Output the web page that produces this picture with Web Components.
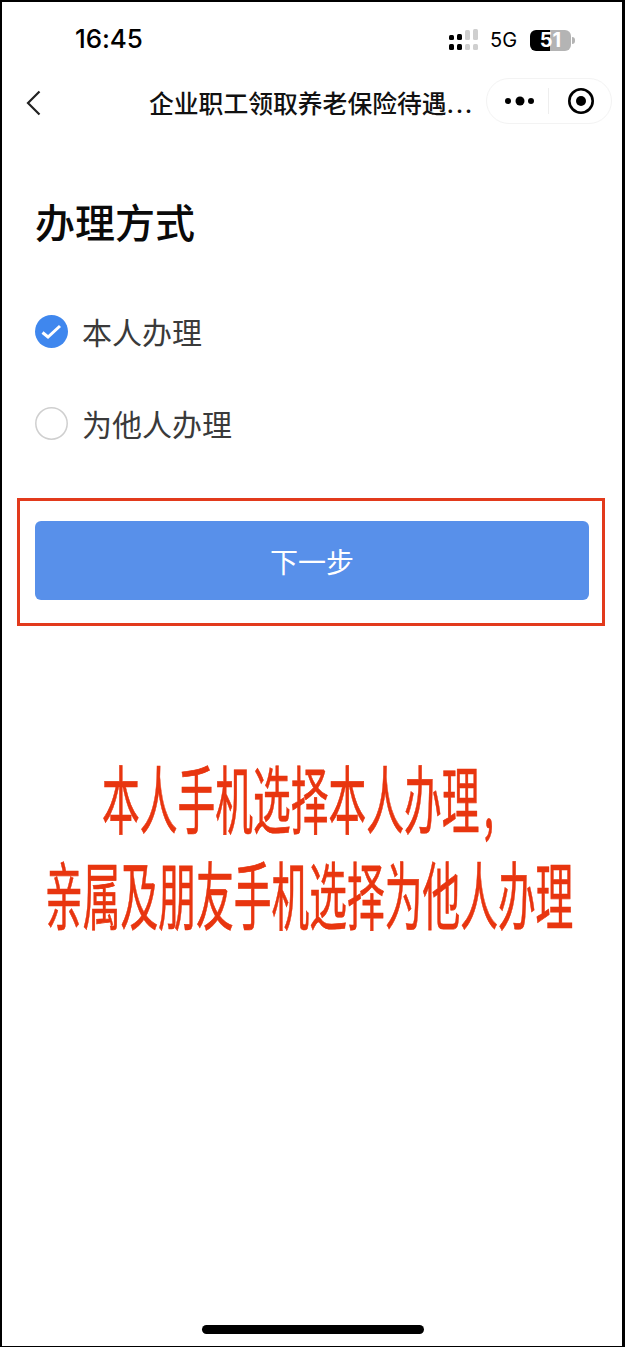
<!DOCTYPE html>
<html lang="zh-CN">
<head>
<meta charset="utf-8">
<title>办理方式</title>
<style>
  html, body { margin: 0; padding: 0; background: #fff; }
  body { font-family: "Inter", "Noto Sans CJK SC", sans-serif; }
</style>
</head>
<body>
<phone-frame>
  <status-bar time="16:45" network="5G" battery="51"></status-bar>
  <nav-bar>企业职工领取养老保险待遇<span style="font-family:Inter,sans-serif;letter-spacing:1.6px">...</span></nav-bar>
  <section-title>办理方式</section-title>
  <radio-row checked>本人办理</radio-row>
  <radio-row>为他人办理</radio-row>
  <marked-button>下一步</marked-button>
  <note-text>
    <span class="first">本人手机选择本人办理<span style="margin-left:8px">,</span></span>
    <span class="second">亲属及朋友手机选择为他人办理</span>
  </note-text>
  <home-bar></home-bar>
</phone-frame>

<script>
const CJK = '"Noto Sans CJK SC", sans-serif';

customElements.define('phone-frame', class extends HTMLElement {
  connectedCallback() {
    this.attachShadow({ mode: 'open' }).innerHTML = `
      <style>
        :host {
          display: flex;
          flex-direction: column;
          box-sizing: border-box;
          width: 625px;
          height: 1347px;
          border: solid #000;
          border-width: 2px 3px 1px 2px;
          background: #fff;
          overflow: hidden;
        }
      </style>
      <slot></slot>
    `;
  }
});

customElements.define('status-bar', class extends HTMLElement {
  connectedCallback() {
    const time = this.getAttribute('time') || '';
    const network = this.getAttribute('network') || '';
    const battery = this.getAttribute('battery') || '';
    this.attachShadow({ mode: 'open' }).innerHTML = `
      <style>
        :host {
          display: flex;
          align-items: center;
          height: 74px;
          padding: 0 47px 0 73px;
          color: #000;
        }
        .time {
          font: 500 26px/1 "Inter", sans-serif;
          letter-spacing: -0.1px;
        }
        .right { margin-left: auto; display: flex; align-items: center; margin-top: 2px; }
        svg.signal { display: block; width: 32px; height: 22px; }
        .net { font: 400 20px/1 "Inter", sans-serif; margin-left: 9px; width: 40px; }
        .battery {
          width: 41px;
          height: 21px;
          border-radius: 6px;
          background: linear-gradient(to right, #000 0 49%, #b4b4b4 49% 100%);
          color: #fff;
          font: 700 20px/21px "Inter", sans-serif;
          text-align: center;
        }
        .nub { width: 3px; height: 7px; margin-left: 1px; border-radius: 0 3px 3px 0; background: #b4b4b4; }
      </style>
      <span class="time">${time}</span>
      <div class="right">
        <svg class="signal" viewBox="0 0 32 22" fill="#000">
          <rect x="0" y="6" width="5" height="5" rx="1.5"/>
          <rect x="8" y="5" width="5" height="6" rx="1.5"/>
          <rect x="16" y="1" width="5" height="10" rx="1.5" fill="#cfcfcf"/>
          <rect x="24" y="0" width="5" height="11" rx="1.5" fill="#cfcfcf"/>
          <rect x="0" y="15" width="5" height="6" rx="1.5"/>
          <rect x="8" y="15" width="5" height="6" rx="1.5"/>
          <rect x="16" y="15" width="5" height="6" rx="1.5" fill="#cfcfcf"/>
          <rect x="24" y="15" width="5" height="6" rx="1.5" fill="#cfcfcf"/>
        </svg>
        <span class="net">${network}</span>
        <span class="battery">${battery}</span>
        <span class="nub"></span>
      </div>
    `;
  }
});

customElements.define('nav-bar', class extends HTMLElement {
  connectedCallback() {
    this.attachShadow({ mode: 'open' }).innerHTML = `
      <style>
        :host {
          display: flex;
          align-items: center;
          height: 54px;
          padding: 0 11px 0 24px;
          color: #111;
        }
        .back { display: block; width: 15px; height: 26px; flex: none; }
        .title {
          margin-left: 108px;
          width: 336px;
          flex: none;
          font: 500 24.8px/1 ${CJK};
          white-space: nowrap;
          overflow: hidden;
        }
        .capsule {
          flex: none;
          display: flex;
          align-items: center;
          box-sizing: border-box;
          width: 126px;
          height: 46px;
          margin-left: 1px;
          border: 1px solid #f3f3f3;
          border-radius: 23px;
          position: relative;
          top: -2px;
        }
        .dots { display: block; width: 61px; height: 12px; flex: none; }
        .divider { width: 1px; height: 26px; background: #eee; flex: none; }
        .target { display: block; width: 28px; height: 28px; margin-left: 18px; flex: none; }
      </style>
      <svg class="back" viewBox="0 0 15 26" fill="none" stroke="#222" stroke-width="2.2">
        <path d="M13.5 1.5 2 13l11.5 11.5"/>
      </svg>
      <span class="title"><slot></slot></span>
      <div class="capsule">
        <svg class="dots" viewBox="0 0 61 12" fill="#000">
          <circle cx="21" cy="6" r="3"/>
          <circle cx="33" cy="6" r="4.5"/>
          <circle cx="44" cy="6" r="3"/>
        </svg>
        <span class="divider"></span>
        <svg class="target" viewBox="0 0 28 28">
          <circle cx="14" cy="14" r="11.7" fill="none" stroke="#000" stroke-width="2.6"/>
          <circle cx="14" cy="14" r="5" fill="#000"/>
        </svg>
      </div>
    `;
  }
});

customElements.define('section-title', class extends HTMLElement {
  connectedCallback() {
    this.attachShadow({ mode: 'open' }).innerHTML = `
      <style>
        :host {
          display: block;
          margin: 67px 0 40px 33px;
          font: 500 40px/48px ${CJK};
          color: #0a0a0a;
        }
      </style>
      <slot></slot>
    `;
  }
});

customElements.define('radio-row', class extends HTMLElement {
  connectedCallback() {
    const mark = this.hasAttribute('checked')
      ? `<svg viewBox="0 0 33 33">
           <circle cx="16.5" cy="16.5" r="16.5" fill="#3f87ee"/>
           <path d="M7.5 17.5 13 22 25 11" fill="none" stroke="#fff" stroke-width="3"/>
         </svg>`
      : `<svg viewBox="0 0 33 33">
           <circle cx="16.5" cy="16.5" r="15.7" fill="#fff" stroke="#cfcfcf" stroke-width="1.5"/>
         </svg>`;
    this.attachShadow({ mode: 'open' }).innerHTML = `
      <style>
        :host {
          display: flex;
          align-items: center;
          height: 92px;
          padding-left: 33px;
          font: 400 30px/1 ${CJK};
          color: #3a3a3a;
        }
        svg { display: block; width: 33px; height: 33px; margin-right: 14px; flex: none; }
      </style>
      ${mark}
      <slot></slot>
    `;
  }
});

customElements.define('marked-button', class extends HTMLElement {
  connectedCallback() {
    this.attachShadow({ mode: 'open' }).innerHTML = `
      <style>
        :host {
          display: block;
          box-sizing: border-box;
          width: 588px;
          height: 128px;
          margin: 29px 0 0 15px;
          padding: 20px 13px 0 15px;
          border: 3px solid #e23a1c;
        }
        button {
          display: block;
          width: 100%;
          height: 79px;
          border: 0;
          border-radius: 6px;
          background: #5890ea;
          color: #fff;
          font: 400 28px/1 ${CJK};
          padding: 0;
        }
      </style>
      <button><slot></slot></button>
    `;
  }
});

customElements.define('note-text', class extends HTMLElement {
  connectedCallback() {
    this.attachShadow({ mode: 'open' }).innerHTML = `
      <style>
        :host {
          display: block;
          margin-top: 122px;
          height: 192px;
          color: #e8350f;
          font: 400 74px/96px ${CJK};
          -webkit-text-stroke: 0.7px #e8350f;
          white-space: nowrap;
        }
        ::slotted(span) {
          display: block;
          width: max-content;
          transform-origin: 0 50%;
          transform: scaleX(0.51);
        }
        ::slotted(.first) { margin-left: 100px; }
        ::slotted(.second) { margin-left: 43px; }
      </style>
      <slot></slot>
    `;
  }
});

customElements.define('home-bar', class extends HTMLElement {
  connectedCallback() {
    this.attachShadow({ mode: 'open' }).innerHTML = `
      <style>
        :host {
          display: block;
          width: 222px;
          height: 9px;
          margin: auto 0 12px 200px;
          border-radius: 5px;
          background: #000;
        }
      </style>
    `;
  }
});
</script>
</body>
</html>
